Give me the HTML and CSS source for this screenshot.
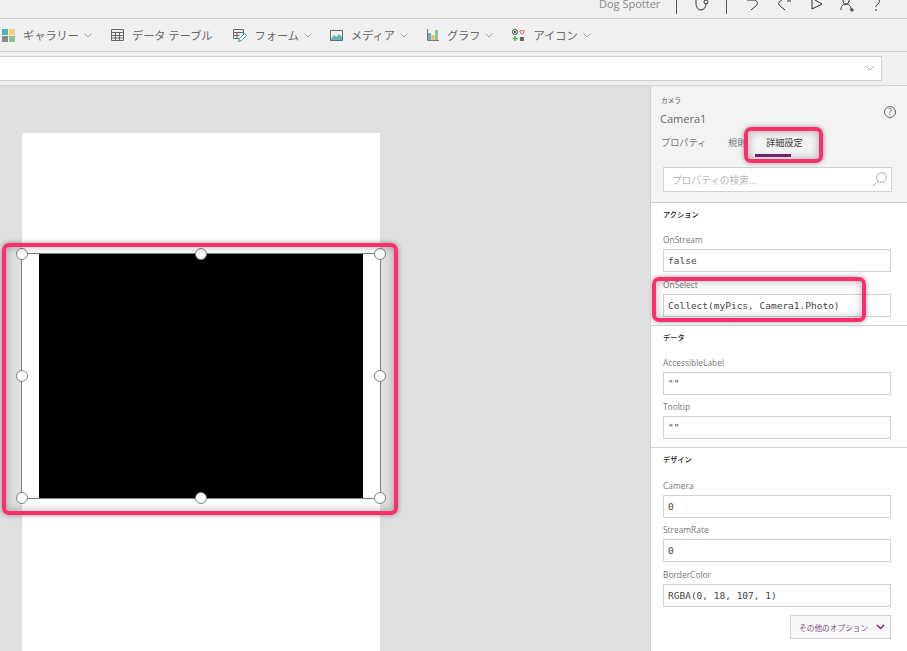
FILE: index.html
```html
<!DOCTYPE html>
<html lang="ja">
<head>
    <meta charset="UTF-8">
    <title>Dog Spotter</title>
    <link rel="stylesheet" href="styles.css">
</head>
<body>
    <div class="titlebar">
        <span class="app-name">Dog Spotter</span>
        <span class="sep"></span>
        <svg class="tb-icon steth" width="14" height="18" viewBox="0 0 14 18"><path d="M1 0v3c0 4 2 7 5 7s5-3 5-7" /><circle cx="11" cy="2" r="2" /></svg>
        <span class="sep sep2"></span>
        <svg class="tb-icon undo" width="13" height="18" viewBox="0 0 13 18"><path d="M0 0h8c3 2 3 4 1 6l-5 4" /></svg>
        <svg class="tb-icon redo" width="14" height="18" viewBox="0 0 14 18"><path d="M9 1h4M4 0C0 2 0 4 2 6l5 4" /></svg>
        <svg class="tb-icon play" width="12" height="18" viewBox="0 0 12 18"><path d="M1 0v9l10-5L4 0" /></svg>
        <svg class="tb-icon user" width="16" height="18" viewBox="0 0 16 18"><path d="M3 0c0 3 1 4 3 4s3-1 3-4M1 10c0-4 2-6 5-6s5 2 5 6M12 8v4M10 10h4" /></svg>
        <svg class="tb-icon help" width="10" height="18" viewBox="0 0 10 18"><path d="M7 0c1 2 0 3-1 4S4 5 4 7" /><path d="M4 9v2" /></svg>
    </div>

    <div class="toolbar">
        <div class="tool gallery-tool">
            <svg width="13" height="13" viewBox="0 0 13 13"><rect width="6" height="6" fill="#4fb3b3"/><rect x="7" width="6" height="6" fill="#f6cf7d"/><rect y="7" width="6" height="6" fill="#8a8a8a"/><rect x="7" y="7" width="6" height="6" fill="#8cc48c"/></svg>
            <span>ギャラリー</span>
            <svg class="chev" width="8" height="5" viewBox="0 0 8 5"><path d="M.5.5 4 4 7.500.5"/></svg>
        </div>
        <div class="tool table-tool">
            <svg width="13" height="12" viewBox="0 0 13 12" class="line-ico"><path d="M.5.500h12v11H.5zM.5 3.500h12M.5 6.500h12M.5 9h12M4.500 3.500v8M8.500 3.500v8"/></svg>
            <span>データ テーブル</span>
        </div>
        <div class="tool form-tool">
            <svg width="14" height="13" viewBox="0 0 14 13" class="line-ico"><path d="M.5.500h10v9H.5zM.5 3.500h10M.5 6.500h6M4 3.500v6"/><path class="pencil" d="M5.500 12.500l1-3 5-5 2 2-5 5z"/></svg>
            <span>フォーム</span>
            <svg class="chev" width="8" height="5" viewBox="0 0 8 5"><path d="M.5.5 4 4 7.500.5"/></svg>
        </div>
        <div class="tool media-tool">
            <svg width="13" height="11" viewBox="0 0 13 11"><path d="M1 9 4 5l2.500 2L9 4l3 3v3H1z" fill="#5fb8b8"/><path d="M.5.500h12v10H.5z" fill="none" stroke="#666"/></svg>
            <span>メディア</span>
            <svg class="chev" width="8" height="5" viewBox="0 0 8 5"><path d="M.5.5 4 4 7.500.5"/></svg>
        </div>
        <div class="tool chart-tool">
            <svg width="12" height="12" viewBox="0 0 12 12"><rect x="1" y="4" width="3" height="7" fill="#5fb8b8"/><rect x="4.500" y="6" width="3" height="5" fill="#f0bd5c"/><rect x="8" y="1" width="3" height="10" fill="#8cc48c"/><path d="M.5 0v11.500H12" fill="none" stroke="#777"/></svg>
            <span>グラフ</span>
            <svg class="chev" width="8" height="5" viewBox="0 0 8 5"><path d="M.5.5 4 4 7.500.5"/></svg>
        </div>
        <div class="tool icon-tool">
            <svg width="13" height="13" viewBox="0 0 13 13"><circle cx="3" cy="3" r="2.500" fill="none" stroke="#555"/><path d="M1.500 1.500l3 3M4.500 1.500l-3 3" stroke="#555"/><path d="M10 5.500 8 3V1.500h1.200l.8.800.8-.8H12V3z" fill="none" stroke="#e8604c"/><path d="M3 7v5M.5 9.500h5" stroke="#4caf50" stroke-width="1.500"/><path d="M8 8h4v4H8z" fill="#666"/></svg>
            <span>アイコン</span>
            <svg class="chev" width="8" height="5" viewBox="0 0 8 5"><path d="M.5.5 4 4 7.500.5"/></svg>
        </div>
    </div>

    <div class="formula-bar">
        <div class="formula-input">
            <svg class="chev" width="8" height="5" viewBox="0 0 8 5"><path d="M.5.5 4 4 7.500.5"/></svg>
        </div>
    </div>

    <div class="main">
        <div class="canvas">
            <div class="artboard">
                <div class="camera">
                    <div class="camera-feed"></div>
                    <span class="handle h-tl"></span>
                    <span class="handle h-tc"></span>
                    <span class="handle h-tr"></span>
                    <span class="handle h-ml"></span>
                    <span class="handle h-mr"></span>
                    <span class="handle h-bl"></span>
                    <span class="handle h-bc"></span>
                    <span class="handle h-br"></span>
                    <div class="mark mark-camera"></div>
                </div>
            </div>
        </div>

        <div class="panel">
            <div class="panel-head">
                <div class="ctl-type">カメラ</div>
                <div class="ctl-name-row">
                    <span class="ctl-name">Camera1</span>
                    <span class="help-circle">?</span>
                </div>
                <div class="tabs">
                    <span class="tab tab-props">プロパティ</span>
                    <span class="tab tab-rules">規則</span>
                    <span class="tab tab-adv">詳細設定</span>
                    <div class="mark mark-tab"></div>
                </div>
                <div class="search">
                    <span>プロパティの検索...</span>
                    <svg width="15" height="15" viewBox="0 0 15 15"><circle cx="9.500" cy="5.500" r="4.800" fill="none" stroke="#aaa"/><path d="M6 9 .8 14.200" stroke="#aaa"/></svg>
                </div>
            </div>

            <div class="section">
                <h3>アクション</h3>
                <div class="field">
                    <label>OnStream</label>
                    <div class="value">false</div>
                </div>
                <div class="field">
                    <label>OnSelect</label>
                    <div class="value">Collect(myPics, Camera1.Photo)</div>
                    <div class="mark mark-select"></div>
                </div>
            </div>

            <div class="section">
                <h3>データ</h3>
                <div class="field">
                    <label>AccessibleLabel</label>
                    <div class="value">""</div>
                </div>
                <div class="field tight">
                    <label>Tooltip</label>
                    <div class="value">""</div>
                </div>
            </div>

            <div class="section last">
                <h3>デザイン</h3>
                <div class="field">
                    <label>Camera</label>
                    <div class="value">0</div>
                </div>
                <div class="field tight">
                    <label>StreamRate</label>
                    <div class="value">0</div>
                </div>
                <div class="field">
                    <label>BorderColor</label>
                    <div class="value">RGBA(0, 18, 107, 1)</div>
                </div>
                <div class="more-row">
                    <button class="more">その他のオプション
                        <svg width="9" height="6" viewBox="0 0 9 6"><path d="M1 1l3.500 3.500L8 1"/></svg>
                    </button>
                </div>
            </div>
        </div>
    </div>
</body>
</html>
```
FILE: styles.css
```css
* {
    box-sizing: border-box;
}
html, body {
    height: 100%;
}
body {
    margin: 0;
    overflow: hidden;
    font-family: "Open Sans", "Noto Sans CJK JP", sans-serif;
    color: #666;
    background: #f0f0f0;
}

/* top strip */
.titlebar {
    height: 19px;
    border-bottom: 1px solid #d2d2d2;
    display: flex;
    align-items: flex-start;
    overflow: hidden;
    padding-left: 599px;
}
.app-name {
    font-size: 11px;
    line-height: 7px;
    width: 77px;
    color: #888;
}
.sep {
    width: 1px;
    height: 14px;
    background: #555;
}
.tb-icon {
    fill: none;
    stroke: #333;
    stroke-width: 1;
    flex: none;
}
.steth { margin-left: 18px; }
.sep2 { margin-left: 17px; }
.undo { margin-left: 20px; }
.redo { margin-left: 18px; }
.play { margin-left: 19px; }
.user { margin-left: 17px; }
.help { margin-left: 16px; }

/* insert ribbon */
.toolbar {
    height: 33px;
    border-bottom: 1px solid #d2d2d2;
    display: flex;
    align-items: center;
    padding-left: 2px;
}
.tool {
    display: flex;
    align-items: center;
    gap: 8px;
    font-size: 11.200px;
    color: #666;
}
.chev {
    fill: none;
    stroke: #a6a6a6;
    margin-left: -3px;
}
.line-ico {
    fill: none;
    stroke: #666;
}
.pencil {
    fill: #fff;
    stroke: #3aa6a6;
}
.table-tool { margin-left: 19px; }
.form-tool { margin-left: 20px; }
.media-tool { margin-left: 18px; }
.chart-tool { margin-left: 19px; }
.icon-tool { margin-left: 19px; }

/* formula bar */
.formula-bar {
    height: 34px;
    border-bottom: 1px solid #d2d2d2;
    padding: 4px 25px 4px 0;
}
.formula-input {
    height: 25px;
    background: #fff;
    border: 1px solid #cfcfcf;
    border-left: none;
    display: flex;
    align-items: center;
    justify-content: flex-end;
    padding-right: 7px;
}

.main {
    height: 565px;
    display: grid;
    grid-template-columns: 650px 257px;
}

/* canvas */
.canvas {
    background: #dfdfdf;
    padding: 47px 0 0 22px;
    overflow: hidden;
}
.artboard {
    width: 358px;
    height: 600px;
    background: #fff;
    padding-top: 120px;
}
.camera {
    position: relative;
    height: 246px;
    padding: 0 17px;
    border: 1px solid #808080;
    margin: 0 -1px;
}
.camera-feed {
    height: 100%;
    background: #000;
}
.handle {
    position: absolute;
    width: 12px;
    height: 12px;
    border-radius: 50%;
    background: #fff;
    border: 1px solid #808080;
}
.h-tl { left: -6px; top: -6px; }
.h-tc { left: 173px; top: -6px; }
.h-tr { right: -6px; top: -6px; }
.h-ml { left: -6px; top: 116px; }
.h-mr { right: -6px; top: 116px; }
.h-bl { left: -6px; bottom: -6px; }
.h-bc { left: 173px; bottom: -6px; }
.h-br { right: -6px; bottom: -6px; }

/* pink annotation boxes */
.mark {
    position: absolute;
    border: 4px solid #fe2e6d;
    border-radius: 7px;
    box-shadow: 0 0 5px rgba(0,0,0,0.4), inset 0 0 8px rgba(0,0,0,0.3);
    pointer-events: none;
}
.mark-camera {
    left: -20px;
    right: -18px;
    top: -11px;
    bottom: -17px;
}
.mark-tab {
    left: 84px;
    top: -6px;
    width: 79px;
    height: 36px;
}
.mark-select {
    left: -11px;
    top: 5px;
    width: 214px;
    height: 45px;
}

/* right panel */
.panel {
    background: #fff;
    border-left: 1px solid #d2d2d2;
    overflow: hidden;
}
.panel-head {
    background: #f3f3f3;
    height: 117px;
    border-bottom: 1px solid #d2d2d2;
    padding: 9px 15px 0 9px;
}
.ctl-type {
    font-size: 6.700px;
    line-height: 12px;
    padding-left: 1px;
    color: #555;
}
.ctl-name-row {
    display: flex;
    justify-content: space-between;
    align-items: center;
    height: 19px;
    margin-top: 2px;
}
.ctl-name {
    font-size: 11px;
}
.help-circle {
    width: 12px;
    height: 12px;
    border: 1px solid #666;
    border-radius: 50%;
    font-size: 9px;
    line-height: 10px;
    text-align: center;
    margin: -13px -4px 0 0;
}
.tabs {
    position: relative;
    display: flex;
    height: 24px;
    margin-top: 5px;
    font-size: 9.200px;
    line-height: 14px;
    padding-top: 3px;
}
.tab-props { margin-left: 1px; width: 67px; color: #777; }
.tab-rules { width: 38px; color: #777; }
.tab-adv {
    color: #444;
}
.tab-adv::after {
    content: "";
    position: absolute;
    left: 95px;
    bottom: 0;
    width: 36px;
    height: 3px;
    background: #742774;
}
.search {
    margin: 10px 0 0 3px;
    height: 25px;
    background: #fff;
    border: 1px solid #d2d2d2;
    display: flex;
    align-items: center;
    justify-content: space-between;
    padding: 0 4px 0 8px;
    font-size: 9.700px;
    color: #b8b8b8;
}

.section {
    padding: 4px 16px 8px 12px;
    border-bottom: 1px solid #d2d2d2;
}
.section.last {
    border-bottom: none;
}
.section h3 {
    margin: 0;
    height: 20px;
    font-size: 7.200px;
    line-height: 14px;
    font-weight: 500;
    color: #222;
}
.section.last h3 {
    height: 21px;
}
.field {
    position: relative;
    padding-top: 3px;
}
.field.tight {
    margin-top: -1px;
}
.field label {
    display: block;
    height: 19px;
    font-size: 8.400px;
    line-height: 19px;
    color: #777;
}
.value {
    height: 23px;
    border: 1px solid #d2d2d2;
    background: #fff;
    padding-left: 4px;
    font-family: "DejaVu Sans Mono", monospace;
    font-size: 9.500px;
    line-height: 21px;
    color: #444;
}
.more-row {
    display: flex;
    justify-content: flex-end;
    margin-top: 8px;
}
.more {
    width: 101px;
    height: 24px;
    padding: 0 0 0 8px;
    background: #f7f7f7;
    border: 1px solid #d2d2d2;
    font-family: inherit;
    font-size: 7.700px;
    color: #7f4a87;
    display: flex;
    align-items: center;
    gap: 8px;
    white-space: nowrap;
}
.more svg {
    fill: none;
    stroke: #742774;
    stroke-width: 1.500;
    flex: none;
}
```
